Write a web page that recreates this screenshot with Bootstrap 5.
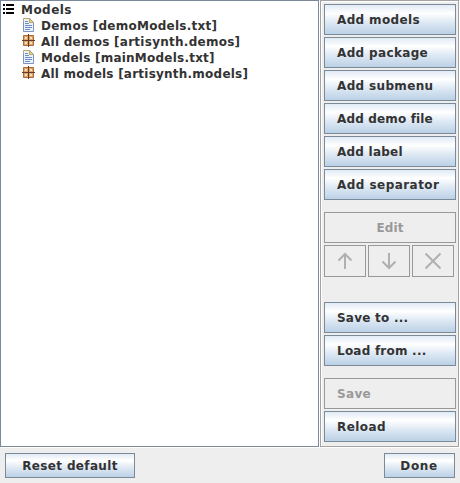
<!DOCTYPE html>
<html lang="en">
<head>
<meta charset="utf-8">
<title>Models</title>
<link href="https://cdn.jsdelivr.net/npm/bootstrap@5.3.0/dist/css/bootstrap.min.css" rel="stylesheet">
<style>
body{font:bold 12px/16px "DejaVu Sans",sans-serif;color:#333;background:#eee;width:460px;height:483px}
.workspace{height:448px}
.tree-pane{border:1px solid #7a8a99;box-shadow:1px 1px #fff;background:#fff;width:319px;height:447px;padding:1px 0 0 1px}
.tree-row{height:16px;white-space:nowrap}
.tree-row svg{flex:none;width:16px;height:16px}
.tree-root svg{margin-right:3px}
.tree-child{padding-left:18px}
.tree-child svg{margin-right:5px}
.side{width:139px;height:447px;margin-left:1px;border:1px solid #a3a3a3;padding:3px 2px 0 3px;box-shadow:inset 1px 1px #fff,1px 1px #fff}
.stack{display:grid;gap:2px}
.tools{gap:2px}
.metal{--bs-btn-color:#333;--bs-btn-hover-color:#333;--bs-btn-border-color:#7a8a99;--bs-btn-hover-border-color:#7a8a99;--bs-btn-border-radius:0;--bs-btn-padding-y:0;--bs-btn-padding-x:12px;--bs-btn-font-size:12px;--bs-btn-font-weight:700;--bs-btn-line-height:16px;--bs-btn-disabled-color:#999;--bs-btn-disabled-border-color:#999;--bs-btn-disabled-opacity:1;
font-family:inherit;display:block;text-align:left;white-space:nowrap;width:132px;height:31px;background:linear-gradient(#dde8f3,#fff 30%,#dde8f3 60%,#b8cfe5) border-box}
.metal:disabled{background:#eee}
.tool{width:42px;height:32px;padding:0;display:flex;align-items:center;justify-content:center}
.tool svg{width:18px;height:18px;fill:none;stroke:#b0b0b0;stroke-width:2}
.gap-edit{margin-top:12px}
.gap-save{margin-top:25px}
.gap-disabled{margin-top:12px}
.footer-bar{height:35px;padding:5px 5px 0}
.footer-bar .metal{height:25px;padding:0;text-align:center}
.footer-bar .w-reset{width:130px}.footer-bar .w-done{width:71px;padding-right:1px}
.l1{letter-spacing:.1px}.l2{letter-spacing:.23px}.l26{letter-spacing:.26px}.l35{letter-spacing:.35px}.l4{letter-spacing:.4px}.l5{letter-spacing:.45px}.l6{letter-spacing:.6px}.l0{letter-spacing:.15px}
</style>
<script src="https://cdn.jsdelivr.net/npm/bootstrap@5.3.0/dist/js/bootstrap.bundle.min.js"></script>
</head>
<body class="overflow-hidden">
<svg class="d-none">
<symbol id="doc" viewBox="0 0 16 16"><path d="M3 1h7.500L14 4.500V15H3z" fill="#eaf3fc"/><path d="M3.500 6V1.500H10" fill="none" stroke="#b5a777"/><path d="M3.500 5v9.500h10V5" fill="none" stroke="#8093bd"/><path d="M9.500 1.500v4h4z" fill="#e7cf85" stroke="#bca65f"/><path d="M5 4.500h3M5 6.500h4M5 8.500h7M5 10.500h7M5 12.500h5" stroke="#6d8cc5"/></symbol>
<symbol id="pkg" viewBox="0 0 16 16"><path d="M3.500 3.500h10v10h-10z" fill="#dca66a" stroke="#b06a35"/><path d="M5 5h2v2H5zM10 5h2v2h-2zM5 10h2v2H5zM10 10h2v2h-2z" fill="#f8e2b3"/><path d="M8.500 2v13M2 8.500h13" stroke="#653b32"/></symbol>
</svg>
<div class="d-flex workspace">
  <div class="tree-pane flex-shrink-0">
    <div class="tree-row tree-root d-flex l5"><svg viewBox="0 0 16 16" shape-rendering="crispEdges"><path d="M1 2h2v2H1zM1 6h2v2H1zM1 10h2v2H1zM4 2h8v2H4zM4 6h8v2H4zM4 10h8v2H4z" fill="#000"/></svg>Models</div>
    <div class="tree-child">
      <div class="tree-row d-flex l26"><svg><use href="#doc" y="-1"/></svg>Demos [demoModels.txt]</div>
      <div class="tree-row d-flex l26"><svg><use href="#pkg" y="-2"/></svg>All demos [artisynth.demos]</div>
      <div class="tree-row d-flex l2"><svg><use href="#doc" y="-1"/></svg>Models [mainModels.txt]</div>
      <div class="tree-row d-flex l2"><svg><use href="#pkg" y="-2"/></svg>All models [artisynth.models]</div>
    </div>
  </div>
  <div class="side flex-shrink-0">
    <div class="stack">
      <button class="btn metal l35">Add models</button>
      <button class="btn metal l35">Add package</button>
      <button class="btn metal l35">Add submenu</button>
      <button class="btn metal l0">Add demo file</button>
      <button class="btn metal l2">Add label</button>
      <button class="btn metal l5">Add separator</button>
    </div>
    <div class="stack gap-edit">
      <button class="btn metal l1 text-center" disabled>Edit</button>
      <div class="d-flex tools">
        <button class="btn metal tool" disabled aria-label="Move up"><svg viewBox="0 0 18 18"><path d="M9 17V2M2.500 8.500L9 2l6.500 6.500"/></svg></button>
        <button class="btn metal tool" disabled aria-label="Move down"><svg viewBox="0 0 18 18"><path d="M9 1v15M2.500 9.500L9 16l6.500-6.500"/></svg></button>
        <button class="btn metal tool" disabled aria-label="Delete"><svg viewBox="0 0 18 18"><path d="M1.500 1.500l15 15M16.500 1.500l-15 15"/></svg></button>
      </div>
    </div>
    <div class="stack gap-save">
      <button class="btn metal l2">Save to ...</button>
      <button class="btn metal l2">Load from ...</button>
    </div>
    <div class="stack gap-disabled">
      <button class="btn metal l35" disabled>Save</button>
      <button class="btn metal l5">Reload</button>
    </div>
  </div>
</div>
<div class="d-flex justify-content-between footer-bar">
  <button class="btn metal w-reset l35">Reset default</button>
  <button class="btn metal w-done l6">Done</button>
</div>
</body>
</html>
